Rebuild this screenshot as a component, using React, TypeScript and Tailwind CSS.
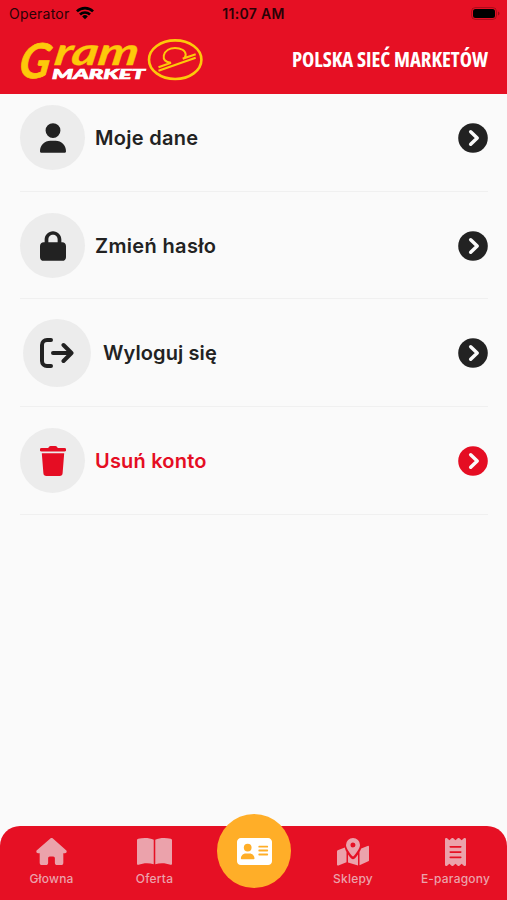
import type { ReactNode } from 'react';
import { FaAddressCard, FaHouse, FaLock, FaReceipt, FaUser } from 'react-icons/fa6';

function StatusBar() {
  return (
    <div className="flex h-7 items-center px-[9px] pb-0.5 text-[#2a0206]">
      <div className="flex flex-1 items-center gap-[7px]">
        <span className="font-['Inter',sans-serif] text-[14px] tracking-[0.22px]">Operator</span>
        <svg className="-mt-px h-[14px] w-[18px] text-black" viewBox="0 0 19 14" fill="none" stroke="currentColor" strokeWidth="2.8">
          <path d="M1 5.3a12.2 12.2 0 0 1 17 0" />
          <path d="M4.2 8.6a7.7 7.7 0 0 1 10.6 0" />
          <path d="M9.5 13.6 6.5 10.6a4.3 4.3 0 0 1 6 0Z" fill="currentColor" stroke="none" />
        </svg>
      </div>
      <span className="font-['Inter',sans-serif] text-[14px] font-semibold tracking-[0.3px]">11:07 AM</span>
      <div className="flex flex-1 justify-end pt-0.5">
        <svg className="-mr-[3px] h-[14px] w-[30px]" viewBox="0 0 30 14">
          <rect x="0.5" y="0.5" width="25" height="12" rx="4" fill="none" stroke="currentColor" strokeOpacity="0.3" />
          <rect x="2" y="2" width="22" height="9" rx="2.5" fill="black" />
          <path d="M27 4.5c2 .8 2 3.2 0 4Z" fill="currentColor" fillOpacity="0.4" />
        </svg>
      </div>
    </div>
  );
}

function Logo() {
  return (
    <svg className="-my-[10px] -ml-1 h-[66px] w-[190px]" viewBox="-4 -10 190 66">
      <g fill="#fdc90a" stroke="#fdc90a" fontFamily="Lato, sans-serif" fontStyle="italic" fontWeight="700">
        <text x="-1" y="41" fontSize="48" strokeWidth="0.7" textLength="31" lengthAdjust="spacingAndGlyphs" transform="translate(5 0) skewX(-9)">G</text>
        <text x="33" y="27.5" fontSize="38" strokeWidth="0.3" textLength="84" lengthAdjust="spacingAndGlyphs" transform="translate(4.500 0) skewX(-9)">ram</text>
      </g>
      <text
        x="32"
        y="42"
        fill="white"
        stroke="white"
        strokeWidth="0.7"
        fontFamily="Lato, sans-serif"
        fontStyle="italic"
        fontWeight="900"
        fontSize="14"
        textLength="93"
        lengthAdjust="spacingAndGlyphs"
      >
        MARKET
      </text>
      <g fill="none" stroke="#fdc90a">
        <ellipse cx="155.2" cy="22.7" rx="26.2" ry="19.3" strokeWidth="2.6" />
        <path d="m138.5 33.7 37.2-13" strokeWidth="2" />
        <path d="M138.500 30.200 151 25.700C145.500 25.500 143 22.500 143.800 18.500 145 13.500 150 11 155 11c6 0 10.500 2.500 10.700 6.500 0 1.800-1 3.500-3 4.300l13-4.600" strokeWidth="2" />
      </g>
    </svg>
  );
}

function LogoutIcon() {
  return (
    <svg className="mr-px h-[30px] w-[34px]" viewBox="0 0 34 30" fill="none" stroke="currentColor" strokeWidth="4" strokeLinecap="round" strokeLinejoin="round">
      <path d="M11 2H7a5 5 0 0 0-5 5v16a5 5 0 0 0 5 5h4M13 15h18M23.500 7l8 8-8 8" />
    </svg>
  );
}

function TrashIcon() {
  return (
    <svg className="h-[30px] w-[26px]" viewBox="0 0 26 30" fill="currentColor">
      <path d="M8.500 1.500Q9 0 10.500 0h5Q17 0 17.500 1.500l.200.500H24.500a1.700 1.700 0 0 1 0 3.500h-23a1.700 1.700 0 0 1 0-3.500H8.300Z" />
      <path d="M1.800 7.300h22.400l-1.600 19.900a3 3 0 0 1-3 2.800H6.400a3 3 0 0 1-3-2.800Z" />
    </svg>
  );
}

function BookIcon() {
  return (
    <svg className="h-[27px] w-[35px]" viewBox="0 0 36 27" preserveAspectRatio="none" fill="currentColor">
      <path d="M17.200 1.800v24.500C12.500 24.700 6.500 24.900 1.500 26.800.7 27.100 0 26.500 0 25.700V2.300C0 1.500.5 1 1.300.8 6.500-.400 13-.300 17.200 1.800ZM18.800 1.800v24.500c4.700-1.600 10.700-1.400 15.700.500.800.300 1.500-.300 1.500-1.100V2.300c0-.800-.500-1.300-1.300-1.500C29.500-.400 23-.300 18.800 1.800Z" />
    </svg>
  );
}

function MapIcon() {
  return (
    <svg className="h-[28px] w-[32px]" viewBox="0 0 32 28" fill="currentColor">
      <path fillRule="evenodd" d="M16 0a7 7 0 0 1 7 7c0 3.200-4 8.500-6.200 11a1.100 1.100 0 0 1-1.600 0C13 15.500 9 10.200 9 7a7 7 0 0 1 7-7Zm0 4.500a2.500 2.500 0 1 0 0 5 2.500 2.500 0 0 0 0-5Z" />
      <path d="M.7 12.300 7.800 9.400Q8.300 11.800 9.500 14v10.200L1.400 27.400A1 1 0 0 1 0 26.500V13.400Q0 12.600.7 12.300ZM11 16.500q1.400 2 3 3.700a2.700 2.700 0 0 0 4 0q1.600-1.700 3-3.700v11L11 24.500ZM22.500 14q1-1.900 1.700-3.600l6.400-2.500A1 1 0 0 1 32 8.800v13.400q0 .8-.7 1.100l-8.800 3.900Z" />
    </svg>
  );
}

function ChevronBadge() {
  return (
    <svg className="size-[30px]" viewBox="0 0 30 30">
      <circle cx="15" cy="15" r="14.8" fill="currentColor" />
      <path d="m12.700 8.800 6.500 6.200-6.500 6.200" fill="none" stroke="#fafafa" strokeWidth="3.5" strokeLinecap="round" strokeLinejoin="round" />
    </svg>
  );
}

function MenuRow({ icon, label, danger, wide }: { icon: ReactNode; label: ReactNode; danger?: boolean; wide?: boolean }) {
  return (
    <li className={`flex h-[107.7px] items-center border-b border-[#f0f0f0] pt-px ${danger ? 'text-[#e50d23]' : 'text-[#222222]'}`}>
      <span
        className={`flex shrink-0 items-center justify-center rounded-full bg-[#ececec] ${
          wide ? 'ml-[3px] mr-3 size-[68px]' : 'mr-2.5 size-[65px]'
        }`}
      >
        {icon}
      </span>
      <span className="flex-1 font-['Inter',sans-serif] text-[20px] font-semibold">{label}</span>
      <ChevronBadge />
    </li>
  );
}

function Tab({ icon, label }: { icon: ReactNode; label: string }) {
  return (
    <div className="flex flex-col items-center text-[#eba2ab]">
      <div className="flex h-[29px] items-center">{icon}</div>
      <span className="mt-[5px] font-['Inter',sans-serif] text-[12px] leading-[16px] font-medium tracking-[0.2px]">{label}</span>
    </div>
  );
}

export default function App() {
  return (
    <div className="flex h-[900px] w-[507px] flex-col overflow-hidden bg-[#fafafa]">
      <header className="h-[94px] shrink-0 bg-[#e61024]">
        <StatusBar />
        <div className="flex items-center justify-between pt-[9px] pr-[19px] pl-5">
          <Logo />
          <span className="font-['Open_Sans',sans-serif] text-[20.7px] font-bold whitespace-nowrap text-white [font-stretch:75%]">
            POLSKA SIEĆ MARKETÓW
          </span>
        </div>
      </header>

      <main className="flex-1">
        <ul className="-mt-2.5 pr-[19px] pl-5">
          <MenuRow icon={<FaUser className="h-[30px] w-[26px]" />} label={<span className="tracking-[0.3px]">Moje dane</span>} />
          <MenuRow icon={<FaLock className="h-[30px] w-[26px]" />} label={<span className="tracking-[0.35px]">Zmień hasło</span>} />
          <MenuRow wide icon={<LogoutIcon />} label={<span className="tracking-[0.1px]">Wyloguj się</span>} />
          <MenuRow danger icon={<TrashIcon />} label={<span className="tracking-[0.2px]">Usuń konto</span>} />
        </ul>
      </main>

      <nav className="grid h-[74px] shrink-0 grid-cols-[103px_103px_96px_102px_103px] rounded-t-[20px] bg-[#e61024] pt-[11px]">
        <Tab icon={<FaHouse className="h-[27px] w-[31px]" />} label="Głowna" />
        <Tab icon={<BookIcon />} label="Oferta" />
        <div className="-mt-[23px] flex size-[74px] items-center justify-center justify-self-center rounded-full bg-[#ffae28] text-white">
          <FaAddressCard className="size-[35px]" />
        </div>
        <Tab icon={<MapIcon />} label="Sklepy" />
        <Tab icon={<FaReceipt className="h-[28px] w-[21px]" />} label="E-paragony" />
      </nav>
    </div>
  );
}
